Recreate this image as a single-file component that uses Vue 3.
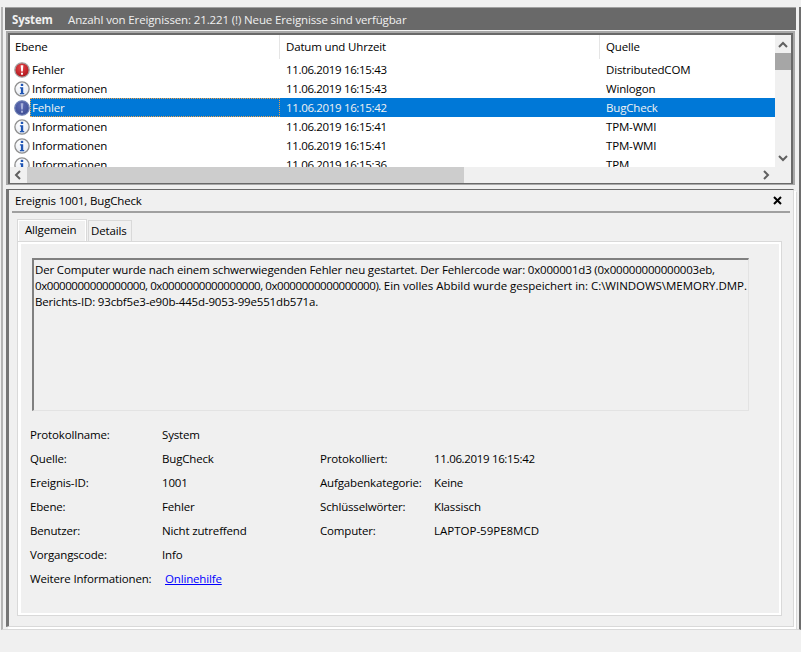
<script setup>
const rows = [
  { kind: 'err', level: 'Fehler', date: '11.06.2019 16:15:43', src: 'DistributedCOM' },
  { kind: 'info', level: 'Informationen', date: '11.06.2019 16:15:43', src: 'Winlogon' },
  { kind: 'sel', level: 'Fehler', date: '11.06.2019 16:15:42', src: 'BugCheck' },
  { kind: 'info', level: 'Informationen', date: '11.06.2019 16:15:41', src: 'TPM-WMI' },
  { kind: 'info', level: 'Informationen', date: '11.06.2019 16:15:41', src: 'TPM-WMI' },
  { kind: 'info', level: 'Informationen', date: '11.06.2019 16:15:36', src: 'TPM' },
]
const props = [
  ['Protokollname:', 'System', '', ''],
  ['Quelle:', 'BugCheck', 'Protokolliert:', '11.06.2019 16:15:42'],
  ['Ereignis-ID:', '1001', 'Aufgabenkategorie:', 'Keine'],
  ['Ebene:', 'Fehler', 'Schlüsselwörter:', 'Klassisch'],
  ['Benutzer:', 'Nicht zutreffend', 'Computer:', 'LAPTOP-59PE8MCD'],
  ['Vorgangscode:', 'Info', '', ''],
]
</script>

<template>
  <div class="page">
    <div class="outer">
      <div class="shell">
        <div class="titlebar">
          <span class="t-name">System</span>
          <span class="t-info">Anzahl von Ereignissen: 21.221 (!) Neue Ereignisse sind verfügbar</span>
        </div>
        <div class="frameouter">
          <div class="listframe">
            <div class="listmain">
              <div class="listview">
                <div class="thead">
                  <div class="th c1">Ebene</div>
                  <div class="th c2">Datum und Uhrzeit</div>
                  <div class="th c3">Quelle</div>
                </div>
                <div v-for="(r, i) in rows" :key="i" class="row" :class="{ selected: r.kind === 'sel' }">
                  <div class="td c1">
                    <svg class="ico" viewBox="0 0 16 16" width="16" height="16">
                      <defs>
                        <radialGradient id="gr" cx="0.45" cy="0.35" r="0.7">
                          <stop offset="0" stop-color="#e8484c" /><stop offset="1" stop-color="#a81016" />
                        </radialGradient>
                        <radialGradient id="gb" cx="0.45" cy="0.35" r="0.7">
                          <stop offset="0" stop-color="#5f6cb4" /><stop offset="1" stop-color="#3a4a90" />
                        </radialGradient>
                        <radialGradient id="gi" cx="0.4" cy="0.3" r="0.8">
                          <stop offset="0" stop-color="#ffffff" /><stop offset="1" stop-color="#e4e8ef" />
                        </radialGradient>
                      </defs>
                      <template v-if="r.kind === 'err'">
                        <circle cx="8" cy="8" r="7.2" fill="url(#gr)" stroke="#a3a3a3" stroke-width="1.3" />
                        <path d="M6.7 3.2h2.6l-.5 6.4H7.2z" fill="#fff" />
                        <rect x="7" y="10.7" width="2" height="2" fill="#fff" />
                      </template>
                      <template v-else-if="r.kind === 'sel'">
                        <circle cx="8" cy="8" r="7.2" fill="url(#gb)" stroke="#6d7fb4" stroke-width="1.3" />
                        <path d="M6.7 3.2h2.6l-.5 6.4H7.2z" fill="#a9b2da" />
                        <rect x="7" y="10.7" width="2" height="2" fill="#a9b2da" />
                      </template>
                      <template v-else>
                        <circle cx="8" cy="8" r="7.1" fill="url(#gi)" stroke="#8f8f8f" stroke-width="1.3" />
                        <rect x="6.8" y="2.8" width="2.4" height="2.2" fill="#1f55b4" />
                        <path d="M5.9 6.2h3.3v5.9h1v1.2H5.9v-1.2h1V7.4h-1z" fill="#1f55b4" />
                      </template>
                    </svg>
                    <span class="lvl">{{ r.level }}</span>
                  </div>
                  <div class="td c2">{{ r.date }}</div>
                  <div class="td c3">{{ r.src }}</div>
                </div>
              </div>
              <div class="vbar">
                <svg width="16" height="18" viewBox="0 0 16 18"><path d="M4 12 8 8 12 12" fill="none" stroke="#606060" stroke-width="2" /></svg>
                <div class="vthumb"></div>
                <svg class="vend" width="16" height="18" viewBox="0 0 16 18"><path d="M4 7 8 11 12 7" fill="none" stroke="#606060" stroke-width="2" /></svg>
              </div>
            </div>
            <div class="hbar">
              <svg width="17" height="16" viewBox="0 0 17 16"><path d="M10 4 6 8 10 12" fill="none" stroke="#606060" stroke-width="2" /></svg>
              <div class="hthumb"></div>
              <svg class="hend" width="17" height="16" viewBox="0 0 17 16"><path d="M6 4 10 8 6 12" fill="none" stroke="#606060" stroke-width="2" /></svg>
            </div>
          </div>
        </div>
        <div class="detail">
          <div class="d-title">
            <span>Ereignis 1001, BugCheck</span>
            <svg width="9" height="9" viewBox="0 0 9 9"><path d="M1 1 8 8M8 1 1 8" stroke="#000" stroke-width="2" /></svg>
          </div>
          <div class="tabs">
            <div class="tab active">Allgemein</div>
            <div class="tab">Details</div>
          </div>
          <div class="pane">
            <div class="msg">
              <div>Der Computer wurde nach einem schwerwiegenden Fehler neu gestartet. Der Fehlercode war: <span class="hex1">0x000001d3 (0x00000000000003eb,</span></div>
              <div><span class="hex2">0x0000000000000000, 0x0000000000000000, 0x0000000000000000).</span> <span class="tail">Ein volles Abbild wurde gespeichert in: C:\WINDOWS\MEMORY.DMP.</span></div>
              <div>Berichts-ID: 93cbf5e3-e90b-445d-9053-99e551db571a.</div>
            </div>
            <div class="props">
              <div v-for="(p, i) in props" :key="i" class="prow">
                <span class="p1">{{ p[0] }}</span>
                <span class="p2">{{ p[1] }}</span>
                <span class="p3">{{ p[2] }}</span>
                <span :class="{ tight: i === 1, wide: i === 4 }">{{ p[3] }}</span>
              </div>
              <div class="prow">
                <span class="pw">Weitere Informationen:</span>
                <a class="plink" href="#">Onlinehilfe</a>
              </div>
            </div>
          </div>
        </div>
      </div>
    </div>
  </div>
</template>

<style>
html, body { margin: 0; background: #f0f0f0; overflow: hidden; }
</style>

<style scoped>
.page {
  width: 801px;
  height: 652px;
  box-sizing: border-box;
  background: #f0f0f0;
  padding: 7px 0 0 1px;
  font-family: "Open Sans", "Noto Sans", sans-serif;
  font-size: 11.5px;
  letter-spacing: -0.16px;
  color: #000;
  overflow: hidden;
}
.outer {
  width: 800px;
  height: 623px;
  box-sizing: border-box;
  border-left: 2px solid #b4b4b4;
  border-right: 2px solid #6e6e6e;
  border-bottom: 1px solid #d9d9d9;
  padding-left: 2px;
}
.shell { width: 791px; display: flex; flex-direction: column; }
.titlebar {
  border-top: 1px solid #a0a0a0;
  height: 22px;
  background: #696969;
  background-clip: padding-box;
  color: #f0f0f0;
  display: flex;
  align-items: center;
  padding-left: 7px;
  flex: none;
}
.t-name { font-weight: 700; width: 56px; }
.t-info { letter-spacing: -0.13px; }
.frameouter {
  margin: 1px 0 0 1px;
  width: 789px;
  box-sizing: border-box;
  border: solid #a8a8a8;
  border-width: 2px 2px 1px 2px;
  flex: none;
}
.listframe {
  border: solid #696969;
  border-width: 2px 2px 1px 2px;
  background: #f0f0f0;
}
.listmain { display: flex; height: 132px; }
.listview { width: 765px; background: #fff; overflow: hidden; flex: none; }
.thead { display: flex; height: 25px; }
.th { box-sizing: border-box; line-height: 24px; height: 24px; }
.th.c1, .th.c2 { border-right: 1px solid #e5e5e5; }
.th.c1 { padding-left: 5px; }
.th.c2, .th.c3 { padding-left: 6px; }
.row { display: flex; height: 19px; line-height: 19px; }
.td { white-space: nowrap; }
.c1 { width: 270px; flex: none; box-sizing: border-box; }
.c2 { width: 320px; flex: none; box-sizing: border-box; }
.td.c2 { padding-left: 6px; letter-spacing: -0.34px; }
.td.c3 { padding-left: 6px; }
.td.c1 { display: flex; align-items: center; padding-left: 4px; }
.ico { flex: none; position: relative; z-index: 1; }
.lvl { padding-left: 2px; height: 19px; flex: 1; }
.selected { background: #0078d7; color: #f2f2f2; }
.selected .td.c1 { background: #fff; }
.selected .lvl { background: #0078d7; outline: 1px dotted #e9a04a; outline-offset: -1px; }
.vbar { width: 16px; display: flex; flex-direction: column; flex: none; }
.vthumb { height: 17px; background: #a6a6a6; }
.vend { margin-top: auto; }
.hbar { height: 16px; display: flex; }
.hthumb { width: 437px; background: #cdcdcd; }
.hend { margin-left: auto; margin-right: 16px; }
.detail {
  margin: 4px 0 0 1px;
  width: 788px;
  height: 438px;
  box-sizing: border-box;
  flex: none;
  border: solid #d9d9d9;
  border-width: 0 1px 1px 0;
  border-left: 3px solid #757575;
  border-top: 1px solid #696969;
  box-shadow: 2px 2px 0 #fff, 3px 3px 0 #d9d9d9;
  background: #f0f0f0;
}
.d-title {
  height: 23px;
  box-sizing: border-box;
  margin: 0 3px;
  display: flex;
  align-items: center;
  justify-content: space-between;
  border-bottom: 2px solid #a0a0a0;
  padding: 0 8px 0 3px;
}
.tabs { display: flex; align-items: flex-end; margin: 6px 0 0 8px; height: 22px; }
.tab {
  width: 44px;
  height: 21px;
  line-height: 20px;
  box-sizing: border-box;
  margin-left: 1px;
  padding-left: 2px;
  border: 1px solid #d9d9d9;
  border-bottom: 0;
}
.tab.active {
  width: 70px;
  height: 23px;
  margin: 0 0 -1px 0;
  line-height: 18px;
  padding-left: 6px;
  border: 2px solid #fff;
  border-bottom: 0;
  outline: 1px solid #d9d9d9;
  outline-offset: -1px;
  background: #f0f0f0;
  position: relative;
  z-index: 1;
}
.pane {
  margin-left: 8px;
  width: 765px;
  height: 375px;
  box-sizing: border-box;
  border: 1px solid #d9d9d9;
  box-shadow: inset 3px 2px 0 #fff, inset -2px -2px 0 #fff;
  padding: 16px 0 0 14px;
}
.msg {
  width: 717px;
  height: 153px;
  box-sizing: border-box;
  border: solid #808080;
  border-width: 2px 1px 1px 2px;
  border-right-color: #e3e3e3;
  border-bottom-color: #e3e3e3;
  padding: 2px 0 0 1px;
  line-height: 16px;
  white-space: nowrap;
}
.hex1 { letter-spacing: -0.2px; }
.hex2 { letter-spacing: -0.43px; }
.tail { letter-spacing: -0.03px; }
.props { margin: 12px 0 0 -2px; }
.prow { display: flex; height: 24px; line-height: 24px; }
.p1 { width: 132px; }
.p2 { width: 158px; }
.p3 { width: 114px; }
.pw { width: 135px; }
.tight { letter-spacing: -0.34px; }
.wide { letter-spacing: 0; }
.plink { color: #0000ff; text-decoration: underline; }
</style>
